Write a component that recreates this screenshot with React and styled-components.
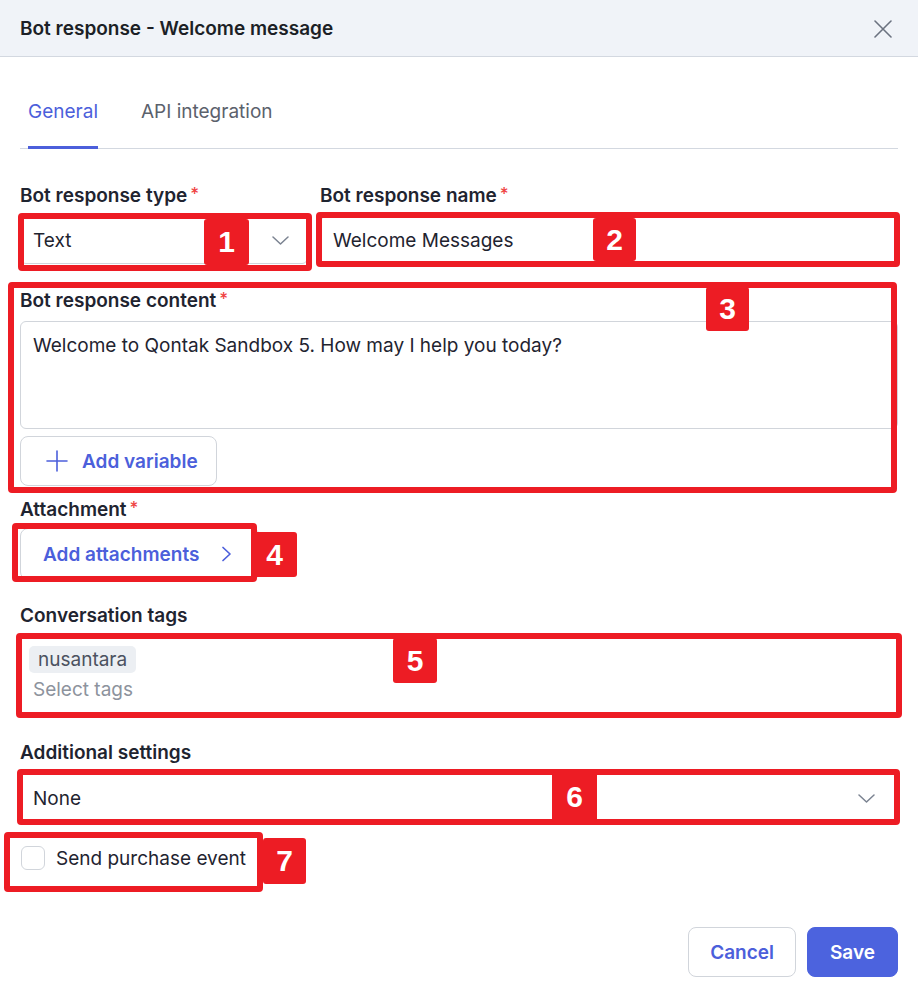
import React from "react";
import styled, { createGlobalStyle } from "styled-components";

const Global = createGlobalStyle`
  html, body { margin: 0; padding: 0; background: #ffffff; }
  body { font-family: Inter, "Noto Sans", sans-serif; color: #1f2937; }
  * { box-sizing: border-box; }
`;

const Page = styled.div`
  position: relative;
  width: 918px;
  height: 991px;
  background: #fff;
  overflow: hidden;
`;

const Header = styled.header`
  height: 57px;
  background: #f0f3f8;
  border-bottom: 1px solid #d3d8e0;
  display: flex;
  align-items: center;
  justify-content: space-between;
  padding: 0 26px 0 20px;
`;

const Title = styled.h1`
  margin: 0;
  font-size: 19px;
  font-weight: 600;
  color: #1c1f26;
`;

const CloseBtn = styled.button`
  border: 0;
  background: transparent;
  padding: 0;
  width: 18px;
  height: 18px;
  display: flex;
  margin-top: 2px;
`;

const Body = styled.div`
  padding: 0 20px;
`;

const Tabs = styled.div`
  margin-top: 35px;
  display: flex;
  gap: 43px;
  padding-left: 8px;
  border-bottom: 1px solid #d3d8e0;
`;

const Tab = styled.div`
  font-size: 19px;
  line-height: 24px;
  padding: 8px 0 22px;
  color: ${(p) => (p.$active ? "#4c5fdb" : "#5b616c")};
  border-bottom: 3px solid ${(p) => (p.$active ? "#4c5fdb" : "transparent")};
  margin-bottom: -1px;
`;

const Row = styled.div`
  display: grid;
  grid-template-columns: 288px 1fr;
  column-gap: 12px;
  margin-top: ${(p) => p.$mt || 0}px;
`;

const Field = styled.div`
  display: flex;
  flex-direction: column;
  margin-top: ${(p) => p.$mt || 0}px;
`;

const Label = styled.label`
  font-size: 19px;
  font-weight: 600;
  line-height: 24px;
  color: #1f2430;
  margin-bottom: ${(p) => p.$mb ?? 8}px;
  display: flex;
  align-items: flex-start;
`;

const Req = styled.span`
  color: #ef4444;
  margin-left: 3px;
  font-weight: 500;
  font-size: 17px;
  line-height: 20px;
`;

const Box = styled.div`
  height: ${(p) => p.$h || 48}px;
  border: 1px solid #d1d5db;
  border-radius: 6px;
  display: flex;
  align-items: center;
  justify-content: space-between;
  padding: 0 ${(p) => p.$pr || 18}px 0 12px;
  font-size: 19px;
  color: #1f2430;
`;

const TextArea = styled.div`
  height: 108px;
  border: 1px solid #d1d5db;
  border-radius: 6px;
  padding: 12px 12px;
  font-size: 19px;
  line-height: 24px;
  color: #1f2430;
`;

const GhostButton = styled.button`
  align-self: flex-start;
  white-space: nowrap;
  height: ${(p) => p.$h || 50}px;
  width: ${(p) => p.$w}px;
  margin-top: ${(p) => p.$mt || 0}px;
  border: 1px solid #d1d5db;
  border-radius: 8px;
  background: #fff;
  display: flex;
  align-items: center;
  justify-content: flex-start;
  gap: ${(p) => p.$gap || 14}px;
  padding: 0 0 0 ${(p) => p.$pl || 0}px;
  font-family: Inter, "Noto Sans", sans-serif;
  font-size: 19px;
  font-weight: 600;
  color: #4c5fdb;
`;

const TagsBox = styled.div`
  height: 80px;
  border: 1px solid #d1d5db;
  border-radius: 6px;
  padding: 9px 12px 0 8px;
  display: flex;
  flex-direction: column;
  align-items: flex-start;
  gap: 5px;
`;

const Chip = styled.span`
  background: #eceff3;
  border-radius: 5px;
  padding: 1px 9px;
  font-size: 19px;
  line-height: 25px;
  color: #4b5260;
`;

const Placeholder = styled.span`
  font-size: 19px;
  line-height: 24px;
  color: #8d939d;
  padding-left: 4px;
`;

const CheckRow = styled.label`
  display: flex;
  align-items: center;
  gap: 11px;
  margin-top: 23px;
  padding-left: 1px;
  font-size: 19px;
  color: #1f2430;
`;

const Check = styled.span`
  width: 24px;
  height: 24px;
  border: 1.5px solid #d1d5db;
  border-radius: 6px;
  background: #fff;
`;

const Footer = styled.div`
  display: flex;
  justify-content: flex-end;
  gap: 11px;
  margin-top: 57px;
`;

const FooterBtn = styled.button`
  height: 50px;
  padding: 0 ${(p) => p.$px}px;
  border-radius: 8px;
  font-family: Inter, "Noto Sans", sans-serif;
  font-size: 19px;
  font-weight: 600;
  border: 1px solid ${(p) => (p.$primary ? "#4c63de" : "#d1d5db")};
  background: ${(p) => (p.$primary ? "#4c63de" : "#fff")};
  color: ${(p) => (p.$primary ? "#fff" : "#4c5fdb")};
`;

/* Annotation overlay (red callout boxes drawn over the form) */
const Callout = styled.div`
  position: absolute;
  border: 6px solid #ed1c24;
  border-radius: 4px;
  pointer-events: none;
`;

const Badge = styled.div`
  position: absolute;
  background: #ed1c24;
  border-radius: 3px;
  color: #fff;
  font-family: "Liberation Sans", Arial, sans-serif;
  font-weight: 700;
  font-size: 30px;
  display: flex;
  align-items: center;
  justify-content: center;
`;

const callouts = [
  { x: 18, y: 213, w: 294, h: 58 },
  { x: 316, y: 212, w: 584, h: 55 },
  { x: 8, y: 282, w: 889, h: 211 },
  { x: 12, y: 523, w: 245, h: 59 },
  { x: 16, y: 633, w: 886, h: 85 },
  { x: 17, y: 769, w: 883, h: 56 },
  { x: 4, y: 832, w: 259, h: 60 },
];

const badges = [
  { n: 1, x: 204, y: 219, w: 45, h: 46 },
  { n: 2, x: 593, y: 218, w: 43, h: 43 },
  { n: 3, x: 706, y: 287, w: 43, h: 44 },
  { n: 4, x: 252, y: 532, w: 45, h: 45 },
  { n: 5, x: 393, y: 638, w: 44, h: 45 },
  { n: 6, x: 552, y: 772, w: 45, h: 50 },
  { n: 7, x: 263, y: 838, w: 43, h: 46 },
];

const ChevronDown = () => (
  <svg width="17" height="9" viewBox="0 0 17 9" fill="none">
    <path d="M1 1l7.5 7L16 1" stroke="#7b8391" strokeWidth="1.5" strokeLinecap="round" strokeLinejoin="round" />
  </svg>
);

export default function App() {
  return (
    <>
      <Global />
      <Page>
        <Header>
          <Title>Bot response - Welcome message</Title>
          <CloseBtn aria-label="Close">
            <svg width="18" height="18" viewBox="0 0 18 18" fill="none">
              <path d="M1 1l16 16M17 1L1 17" stroke="#6b7280" strokeWidth="1.6" strokeLinecap="round" />
            </svg>
          </CloseBtn>
        </Header>
        <Body>
          <Tabs>
            <Tab $active>General</Tab>
            <Tab>API integration</Tab>
          </Tabs>

          <Row $mt={35}>
            <Field>
              <Label>Bot response type<Req>*</Req></Label>
              <Box>
                <span>Text</span>
                <ChevronDown />
              </Box>
            </Field>
            <Field>
              <Label>Bot response name<Req>*</Req></Label>
              <Box>
                <span>Welcome Messages</span>
              </Box>
            </Field>
          </Row>

          <Field $mt={25}>
            <Label>Bot response content<Req>*</Req></Label>
            <TextArea>Welcome to Qontak Sandbox 5. How may I help you today?</TextArea>
            <GhostButton $w={197} $mt={7} $gap={14} $pl={25}>
              <svg width="22" height="22" viewBox="0 0 22 22" fill="none">
                <path d="M11 1v20M1 11h20" stroke="#4c5fdb" strokeWidth="1.6" strokeLinecap="round" />
              </svg>
              Add variable
            </GhostButton>
          </Field>

          <Field $mt={12}>
            <Label $mb={6}>Attachment<Req>*</Req></Label>
            <GhostButton $w={240} $h={52} $gap={22} $pl={22}>
              Add attachments
              <svg width="11" height="16" viewBox="0 0 11 16" fill="none">
                <path d="M2 1.5l7 6.5-7 6.5" stroke="#4c5fdb" strokeWidth="1.7" strokeLinecap="round" strokeLinejoin="round" />
              </svg>
            </GhostButton>
          </Field>

          <Field $mt={24}>
            <Label>Conversation tags</Label>
            <TagsBox>
              <Chip>nusantara</Chip>
              <Placeholder>Select tags</Placeholder>
            </TagsBox>
          </Field>

          <Field $mt={25}>
            <Label>Additional settings</Label>
            <Box $h={50} $pr={22}>
              <span>None</span>
              <ChevronDown />
            </Box>
          </Field>

          <CheckRow>
            <Check />
            Send purchase event
          </CheckRow>

          <Footer>
            <FooterBtn $px={21}>Cancel</FooterBtn>
            <FooterBtn $primary $px={22}>Save</FooterBtn>
          </Footer>
        </Body>

        {callouts.map((c, i) => (
          <Callout key={i} style={{ left: c.x, top: c.y, width: c.w, height: c.h }} />
        ))}
        {badges.map((b) => (
          <Badge key={b.n} style={{ left: b.x, top: b.y, width: b.w, height: b.h }}>
            {b.n}
          </Badge>
        ))}
      </Page>
    </>
  );
}
